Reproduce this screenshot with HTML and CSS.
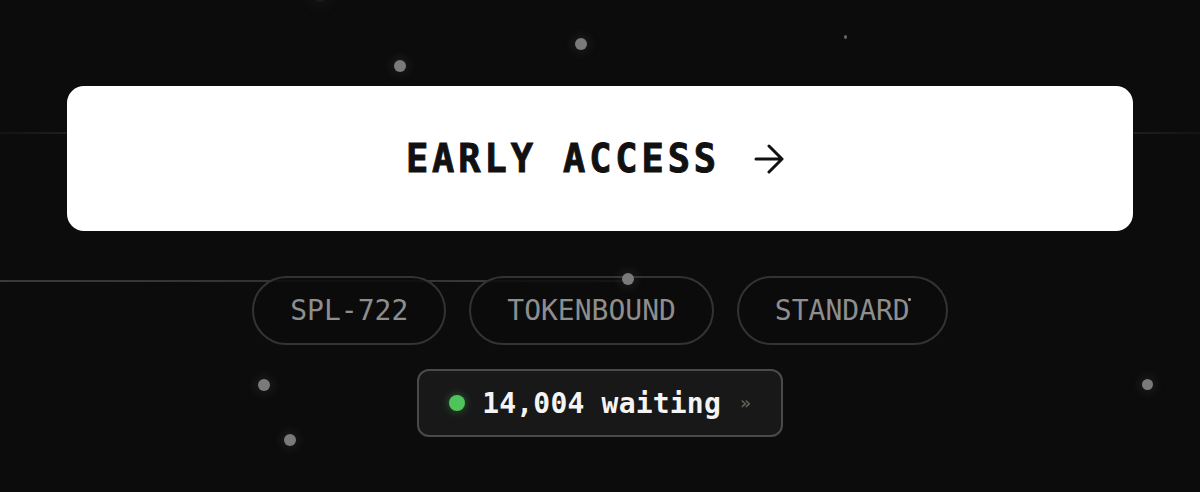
FILE: index.html
```html
<!DOCTYPE html>
<html lang="en">
<head>
<meta charset="utf-8">
<title>Early Access</title>
<link rel="stylesheet" href="styles.css">
</head>
<body>
<div class="scene">
  <div class="grid-line gl-1"></div>
  <div class="trail"></div>
  <span class="star s1"></span>
  <span class="star s2"></span>
  <span class="star s3 tiny"></span>
  <span class="star s4"></span>
  <span class="star s5"></span>
  <span class="star s6"></span>
  <span class="star s7"></span>
  <span class="star s8 faint"></span>

  <main class="content">
    <a class="cta" href="#">
      <span class="cta-label">EARLY ACCESS</span>
      <svg class="cta-arrow" width="30" height="30" viewBox="0 0 30 30" fill="none" stroke="#111" stroke-width="3" stroke-linecap="round" stroke-linejoin="round"><path d="M2 15H28M15 2L28 15L15 28"/></svg>
    </a>
    <div class="tags">
      <span class="tag">SPL-722</span>
      <span class="tag">TOKENBOUND</span>
      <span class="tag">STANDARD<span class="mark"></span></span>
    </div>
    <div class="waiting">
      <span class="dot"></span>
      <span class="count">14,004 waiting</span>
      <span class="chev">»</span>
    </div>
  </main>
</div>
</body>
</html>
```
FILE: styles.css
```css
* { box-sizing: border-box; }
html, body {
  margin: 0;
  padding: 0;
  background: #0c0c0c;
  width: 1200px;
  height: 492px;
  overflow: hidden;
}
.scene {
  position: relative;
  width: 1200px;
  height: 492px;
  background: #0c0c0c;
  font-family: "DejaVu Sans Mono", "Liberation Mono", monospace;
}
.content {
  position: relative;
  z-index: 1;
  display: flex;
  flex-direction: column;
  align-items: center;
  padding: 86px 67px 0;
}
.cta {
  width: 100%;
  height: 145px;
  background: #ffffff;
  border-radius: 17px;
  display: flex;
  align-items: center;
  justify-content: center;
  gap: 34px;
  text-decoration: none;
  color: #111;
  padding-right: 10px;
}
.cta-label {
  font-size: 37px;
  font-weight: 700;
  letter-spacing: 3.9px;
  line-height: 1;
  -webkit-text-stroke: 0.9px #111;
  transform: scaleY(1.06);
}
.cta-arrow { display: block; }
.tags {
  display: flex;
  gap: 23px;
  margin-top: 45px;
}
.tag {
  position: relative;
  height: 69px;
  padding: 0 36px;
  border: 2px solid #333333;
  border-radius: 35px;
  display: flex;
  align-items: center;
  font-size: 28px;
  color: #8e8e8e;
  letter-spacing: 0;
  background: rgba(12,12,12,0.85);
}
.mark {
  position: absolute;
  right: 35px;
  top: 20px;
  width: 3px;
  height: 3px;
  border-radius: 50%;
  background: #aaa;
}
.waiting {
  margin-top: 24px;
  height: 68px;
  display: flex;
  align-items: center;
  padding: 0 30px 0 30px;
  border: 2px solid #4a4a4a;
  border-radius: 12px;
  background: #181818;
}
.dot {
  width: 16px;
  height: 16px;
  border-radius: 50%;
  background: #4fc45a;
  box-shadow: 0 0 8px rgba(80, 200, 90, 0.45);
}
.count {
  margin-left: 17px;
  font-size: 28px;
  font-weight: 700;
  color: #f4f4f4;
  letter-spacing: 0.2px;
}
.chev {
  margin-left: 19px;
  font-size: 18px;
  color: #6a6a6a;
  position: relative;
  top: -1px;
}
.star {
  position: absolute;
  width: 12px;
  height: 12px;
  margin: -6px 0 0 -6px;
  border-radius: 50%;
  background: #7a7a7a;
  box-shadow: 0 0 10px 4px rgba(120,120,120,0.12);
  z-index: 2;
}
.star.tiny { width: 3px; height: 4px; margin: -2px 0 0 -1.5px; background: #666; box-shadow: none; }
.star.faint { background: rgba(120,120,120,0.15); box-shadow: 0 0 14px 6px rgba(120,120,120,0.08); }
.s1 { left: 400px; top: 66px; }
.s2 { left: 581px; top: 44px; }
.s3 { left: 845px; top: 37px; }
.s4 { left: 628px; top: 279px; }
.s5 { left: 264px; top: 385px; }
.s6 { left: 290px; top: 440px; }
.s7 { left: 1148px; top: 385px; width: 11px; height: 11px; }
.s8 { left: 320px; top: -4px; }
.trail {
  position: absolute;
  left: 0;
  top: 280px;
  width: 628px;
  height: 2px;
  background: linear-gradient(90deg, #3a3a3a, #303030 60%, #444);
  z-index: 0;
}
.grid-line {
  position: absolute;
  height: 2px;
  z-index: 0;
}
.gl-1 {
  left: 0;
  top: 132px;
  width: 1200px;
  background: linear-gradient(90deg, rgba(34,34,34,0.3), rgba(34,34,34,0.8) 5%, rgba(34,34,34,0.8) 95%, rgba(34,34,34,0.3));
}
```
